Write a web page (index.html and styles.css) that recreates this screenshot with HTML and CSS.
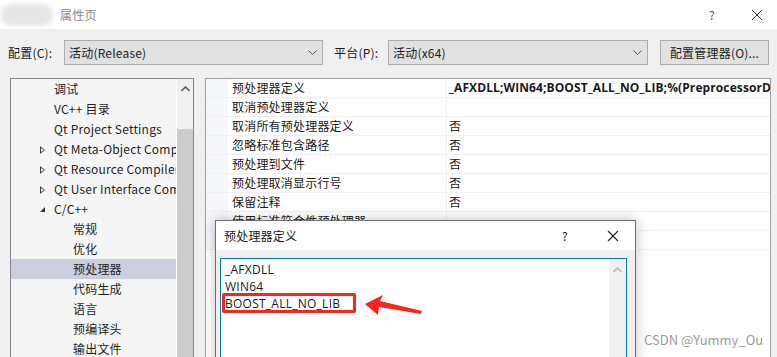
FILE: index.html
```html
<!DOCTYPE html>
<html>
<head>
	<meta charset="utf-8">
	<link rel="stylesheet" href="styles.css">
</head>
<body>
	<div class="titlebar">
		<div class="blur"></div>
		<div class="title">属性页</div>
		<div class="tb_help">?</div>
		<div class="tb_close">
			<svg width="12" height="12" viewBox="0 0 12 12"><path d="M1 1L11 11M11 1L1 11" stroke="#333" stroke-width="1"/></svg>
		</div>
	</div>

	<div class="config_row">
		<div class="label">配置(C):</div>
		<div class="combo combo1">
			<span>活动(Release)</span>
			<svg class="chev" width="9" height="6" viewBox="0 0 9 6"><path d="M0.5 0.5L4.5 4.5L8.5 0.5" stroke="#555" fill="none"/></svg>
		</div>
		<div class="label label2">平台(P):</div>
		<div class="combo combo2">
			<span>活动(x64)</span>
			<svg class="chev" width="9" height="6" viewBox="0 0 9 6"><path d="M0.5 0.5L4.5 4.5L8.5 0.5" stroke="#555" fill="none"/></svg>
		</div>
		<div class="button">配置管理器(O)...</div>
	</div>

	<div class="main">
		<div class="tree">
			<div class="tree_list">
				<div class="item lv1">调试</div>
				<div class="item lv1">VC++ 目录</div>
				<div class="item lv1">Qt Project Settings</div>
				<div class="item lv1"><span class="arrow open"></span>Qt Meta-Object Compiler</div>
				<div class="item lv1"><span class="arrow open"></span>Qt Resource Compiler</div>
				<div class="item lv1"><span class="arrow open"></span>Qt User Interface Compiler</div>
				<div class="item lv1"><span class="arrow down"></span>C/C++</div>
				<div class="item lv2">常规</div>
				<div class="item lv2">优化</div>
				<div class="item lv2 selected">预处理器</div>
				<div class="item lv2">代码生成</div>
				<div class="item lv2">语言</div>
				<div class="item lv2">预编译头</div>
				<div class="item lv2">输出文件</div>
			</div>
			<div class="scrollbar">
				<svg class="up" width="9" height="6" viewBox="0 0 9 6"><path d="M0.5 5L4.5 1L8.5 5" stroke="#606060" stroke-width="1.6" fill="none"/></svg>
				<div class="thumb"></div>
			</div>
		</div>

		<div class="grid">
			<div class="row">
				<div class="margin"></div><div class="name">预处理器定义</div><div class="value bold">_AFXDLL;WIN64;BOOST_ALL_NO_LIB;%(PreprocessorDefinitions)</div>
			</div>
			<div class="row">
				<div class="margin"></div><div class="name">取消预处理器定义</div><div class="value"></div>
			</div>
			<div class="row">
				<div class="margin"></div><div class="name">取消所有预处理器定义</div><div class="value">否</div>
			</div>
			<div class="row">
				<div class="margin"></div><div class="name">忽略标准包含路径</div><div class="value">否</div>
			</div>
			<div class="row">
				<div class="margin"></div><div class="name">预处理到文件</div><div class="value">否</div>
			</div>
			<div class="row">
				<div class="margin"></div><div class="name">预处理取消显示行号</div><div class="value">否</div>
			</div>
			<div class="row">
				<div class="margin"></div><div class="name">保留注释</div><div class="value">否</div>
			</div>
			<div class="row">
				<div class="margin"></div><div class="name">使用标准符合性预处理器</div><div class="value"></div>
			</div>
			<div class="row">
				<div class="margin"></div><div class="name"></div><div class="value"></div>
			</div>
		</div>
	</div>

	<div class="dialog">
		<div class="dlg_title">
			<div class="dlg_name">预处理器定义</div>
			<div class="dlg_help">?</div>
			<div class="dlg_close">
				<svg width="12" height="12" viewBox="0 0 12 12"><path d="M1 1L11 11M11 1L1 11" stroke="#222" stroke-width="1.1"/></svg>
			</div>
		</div>
		<div class="dlg_body">
			<div class="textarea">
				<div class="lines">
					<div>_AFXDLL</div>
					<div>WIN64</div>
					<div>BOOST_ALL_NO_LIB</div>
				</div>
				<div class="ta_scroll">
					<svg width="9" height="6" viewBox="0 0 9 6"><path d="M0.5 5L4.5 1L8.5 5" stroke="#b8b8b8" stroke-width="1.6" fill="none"/></svg>
				</div>
			</div>
		</div>
	</div>

	<div class="mark_box"></div>
	<svg class="mark_arrow" width="62" height="24" viewBox="0 0 62 24">
		<polygon points="1,10 19,1 16,7 58,17 57,20 15,13 14,21" fill="#f5271b"/>
	</svg>

	<div class="watermark">CSDN @Yummy_Ou</div>
</body>
</html>
```

FILE: styles.css
```css
body {
	margin: 0;
	padding: 0;
	width: 777px;
	height: 357px;
	overflow: hidden;
	background: #f0f0f0;
	font-family: "Noto Sans CJK SC", "Noto Sans", sans-serif;
	font-size: 12px;
	letter-spacing: 0.2px;
	color: #1a1a1a;
	position: relative;
}
.titlebar {
	height: 29px;
	background: white;
	display: flex;
	align-items: center;
}
.blur {
	width: 52px;
	height: 22px;
	margin-left: 1px;
	border-radius: 11px;
	background: #e6e6e6;
	filter: blur(2px);
}
.title {
	margin-left: 7px;
	color: #8a8a8a;
	font-size: 12px;
}
.tb_help {
	margin-left: auto;
	color: #555;
	font-size: 12px;
	width: 10px;
}
.tb_close {
	margin-left: 32px;
	margin-right: 14px;
	display: flex;
}

.config_row {
	margin-top: 11px;
	display: flex;
	align-items: center;
	height: 25px;
}
.label {
	margin-left: 8px;
	width: 56px;
}
.label2 {
	margin-left: 11px;
	width: 54px;
}
.combo {
	background: #e1e1e1;
	border: 1px solid #adadad;
	display: flex;
	align-items: center;
	padding-left: 4px;
	box-sizing: border-box;
	height: 25px;
}
.combo1 { width: 259px; }
.combo2 { width: 260px; }
.chev {
	margin-left: auto;
	margin-right: 5px;
}
.button {
	margin-left: 12px;
	width: 109px;
	height: 25px;
	box-sizing: border-box;
	border: 1px solid #adadad;
	background: #e1e1e1;
	display: flex;
	align-items: center;
	justify-content: center;
}

.main {
	display: flex;
	margin-top: 13px;
	margin-left: 10px;
	gap: 11px;
}
.tree {
	width: 184px;
	height: 290px;
	box-sizing: border-box;
	border: 1px solid #828790;
	background: #f5f5f5;
	display: flex;
}
.tree_list {
	width: 165px;
	overflow: hidden;
	border-right: 1px solid white;
}
.item {
	height: 20px;
	line-height: 20px;
	white-space: nowrap;
	position: relative;
	color: #1e1e1e;
}
.lv1 { padding-left: 43px; }
.lv2 { padding-left: 62px; }
.selected { background: #cccedb; }
.arrow {
	position: absolute;
	left: 29px;
	top: 7px;
	width: 0;
	height: 0;
}
.arrow.open {
	border-left: 5px solid #444;
	border-top: 4px solid transparent;
	border-bottom: 4px solid transparent;
}
.arrow.open::after {
	content: "";
	position: absolute;
	left: -4px;
	top: -2px;
	border-left: 3px solid #f5f5f5;
	border-top: 2px solid transparent;
	border-bottom: 2px solid transparent;
}
.arrow.down {
	top: 8px;
	border-right: 5px solid #333;
	border-top: 5px solid transparent;
}
.scrollbar {
	width: 16px;
	background: #f0f0f0;
	display: flex;
	flex-direction: column;
	align-items: center;
}
.up {
	margin-top: 7px;
}
.thumb {
	margin-top: 37px;
	width: 16px;
	flex: 1;
	background: #cdcdcd;
}

.grid {
	width: 566px;
	height: 290px;
	box-sizing: border-box;
	border: 1px solid #a0a0a0;
	border-bottom: none;
	background: white;
	overflow: hidden;
}
.row {
	display: flex;
	height: 19px;
	border-bottom: 1px solid #f0f0f4;
	box-sizing: border-box;
}
.margin {
	width: 22px;
	background: #f5f7fc;
}
.name {
	width: 214px;
	padding-left: 4px;
	line-height: 18px;
	border-right: 1px solid #f0f0f4;
	white-space: nowrap;
}
.value {
	flex: 1;
	padding-left: 2px;
	line-height: 18px;
	white-space: nowrap;
	overflow: hidden;
}
.bold {
	font-weight: bold;
	font-family: "Open Sans", "Noto Sans CJK SC", sans-serif;
	font-size: 12px;
	letter-spacing: 0.1px;
}

.dialog {
	position: absolute;
	left: 215px;
	top: 220px;
	width: 421px;
	height: 150px;
	box-sizing: border-box;
	border: 1px solid #707070;
	background: #f0f0f0;
	box-shadow: 0 0 12px rgba(0, 0, 0, 0.25);
}
.dlg_title {
	height: 29px;
	background: white;
	display: flex;
	align-items: center;
}
.dlg_name {
	margin-left: 8px;
	font-size: 12px;
}
.dlg_help {
	margin-left: auto;
	width: 10px;
	color: #222;
}
.dlg_close {
	margin-left: 35px;
	margin-right: 16px;
	display: flex;
}
.dlg_body {
	padding: 8px 8px 0 4px;
}
.textarea {
	height: 110px;
	border: 1px solid #0078d7;
	background: white;
	display: flex;
}
.lines {
	flex: 1;
	padding: 2px 0 0 4px;
	line-height: 17px;
	font-family: "Open Sans", "Noto Sans", sans-serif;
	font-size: 12px;
	letter-spacing: 0.25px;
	color: #1a1a1a;
}
.ta_scroll {
	width: 17px;
	background: #f0f0f0;
	display: flex;
	justify-content: center;
	padding-top: 8px;
	box-sizing: border-box;
}
.ta_scroll svg { display: block; }

.mark_box {
	position: absolute;
	left: 222px;
	top: 293px;
	width: 134px;
	height: 20px;
	box-sizing: border-box;
	border: 3px solid #f5271b;
	border-radius: 2px;
}
.mark_arrow {
	position: absolute;
	left: 364px;
	top: 294px;
}
.watermark {
	position: absolute;
	left: 644px;
	top: 330px;
	font-family: "Noto Sans CJK SC", sans-serif;
	font-size: 13px;
	letter-spacing: 0;
	color: #9a9a9a;
}
```
